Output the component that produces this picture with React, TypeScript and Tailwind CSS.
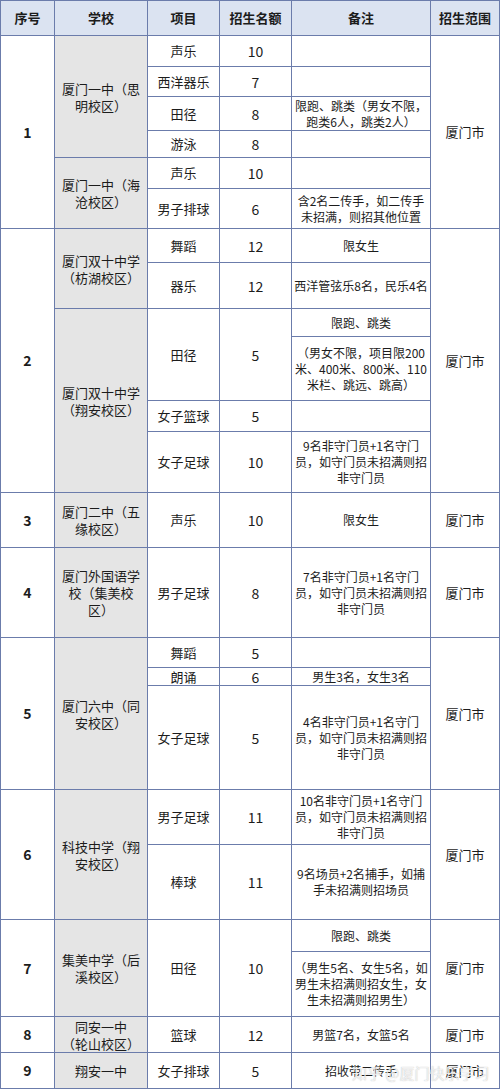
import type { ReactNode } from "react";

const line = "border-r border-b border-[#6b7cab]";

function Cell({
  children,
  className = "",
}: {
  children?: ReactNode;
  className?: string;
}) {
  return (
    <div
      className={`${line} flex items-center justify-center text-center overflow-hidden ${className}`}
    >
      {children}
    </div>
  );
}

function School({ children, className = "" }: { children: ReactNode; className?: string }) {
  return (
    <Cell className={`bg-[#e5e5e5] text-[13px] leading-[17px] ${className}`}>
      <div>{children}</div>
    </Cell>
  );
}

function Item({ children, className = "" }: { children?: ReactNode; className?: string }) {
  return <Cell className={`text-[13px] leading-[16px] ${className}`}>{children}</Cell>;
}

function Num({ children, className = "" }: { children?: ReactNode; className?: string }) {
  return <Cell className={`text-[14px] leading-[16px] ${className}`}>{children}</Cell>;
}

function Note({ children, className = "" }: { children?: ReactNode; className?: string }) {
  return (
    <Cell className={`text-[12px] leading-[16px] ${className}`}>
      <div>{children}</div>
    </Cell>
  );
}

function Seq({ n, className = "" }: { n: string; className?: string }) {
  return <Cell className={`text-[14px] font-bold ${className}`}>{n}</Cell>;
}

function Area({ className = "" }: { className?: string }) {
  return <Cell className={`text-[13px] ${className}`}>厦门市</Cell>;
}

const headers = ["序号", "学校", "项目", "招生名额", "备注", "招生范围"];

export default function App() {
  return (
    <div
      className="relative w-[500px] bg-white text-[#1c1c1c]"
      style={{ fontFamily: '"Noto Sans CJK SC", "Noto Sans", sans-serif' }}
    >
      <div className="grid grid-cols-[54px_93px_72px_72px_139px_69px] grid-rows-[35px_31px_30px_34px_27px_31px_40px_34px_46px_28px_64px_31px_61px_55px_90px_30px_18px_104px_55px_75px_32px_65px_36px_36px] border-t border-l border-[#6b7cab]">
        {headers.map((h) => (
          <Cell key={h} className="bg-[#dbe3f1] text-[13px] font-bold">
            {h}
          </Cell>
        ))}

        {/* 1 */}
        <Seq n="1" className="row-span-6" />
        <School className="row-span-4">
          厦门一中（思
          <br />
          明校区）
        </School>
        <Item>声乐</Item>
        <Num>10</Num>
        <Note />
        <Area className="row-span-6" />
        <Item>西洋器乐</Item>
        <Num>7</Num>
        <Note />
        <Item>田径</Item>
        <Num>8</Num>
        <Note>
          限跑、跳类（男女不限，
          <br />
          跑类6人，跳类2人）
        </Note>
        <Item>游泳</Item>
        <Num>8</Num>
        <Note />
        <School className="row-span-2">
          厦门一中（海
          <br />
          沧校区）
        </School>
        <Item>声乐</Item>
        <Num>10</Num>
        <Note />
        <Item>男子排球</Item>
        <Num>6</Num>
        <Note>
          含2名二传手，如二传手
          <br />
          未招满，则招其他位置
        </Note>

        {/* 2 */}
        <Seq n="2" className="row-span-6" />
        <School className="row-span-2">
          厦门双十中学
          <br />
          （枋湖校区）
        </School>
        <Item>舞蹈</Item>
        <Num>12</Num>
        <Note>限女生</Note>
        <Area className="row-span-6" />
        <Item>器乐</Item>
        <Num>12</Num>
        <Note>西洋管弦乐8名，民乐4名</Note>
        <School className="row-span-4">
          厦门双十中学
          <br />
          （翔安校区）
        </School>
        <Item className="row-span-2">田径</Item>
        <Num className="row-span-2">5</Num>
        <Note>限跑、跳类</Note>
        <Note>
          （男女不限，项目限200
          <br />
          米、400米、800米、110
          <br />
          米栏、跳远、跳高）
        </Note>
        <Item>女子篮球</Item>
        <Num>5</Num>
        <Note />
        <Item>女子足球</Item>
        <Num>10</Num>
        <Note>
          9名非守门员+1名守门
          <br />
          员，如守门员未招满则招
          <br />
          非守门员
        </Note>

        {/* 3 */}
        <Seq n="3" />
        <School>
          厦门二中（五
          <br />
          缘校区）
        </School>
        <Item>声乐</Item>
        <Num>10</Num>
        <Note>限女生</Note>
        <Area />

        {/* 4 */}
        <Seq n="4" />
        <School>
          厦门外国语学
          <br />
          校（集美校
          <br />
          区）
        </School>
        <Item>男子足球</Item>
        <Num>8</Num>
        <Note>
          7名非守门员+1名守门
          <br />
          员，如守门员未招满则招
          <br />
          非守门员
        </Note>
        <Area />

        {/* 5 */}
        <Seq n="5" className="row-span-3" />
        <School className="row-span-3">
          厦门六中（同
          <br />
          安校区）
        </School>
        <Item>舞蹈</Item>
        <Num>5</Num>
        <Note />
        <Area className="row-span-3" />
        <Item>朗诵</Item>
        <Num>6</Num>
        <Note>男生3名，女生3名</Note>
        <Item>女子足球</Item>
        <Num>5</Num>
        <Note>
          4名非守门员+1名守门
          <br />
          员，如守门员未招满则招
          <br />
          非守门员
        </Note>

        {/* 6 */}
        <Seq n="6" className="row-span-2" />
        <School className="row-span-2">
          科技中学（翔
          <br />
          安校区）
        </School>
        <Item>男子足球</Item>
        <Num>11</Num>
        <Note>
          10名非守门员+1名守门
          <br />
          员，如守门员未招满则招
          <br />
          非守门员
        </Note>
        <Area className="row-span-2" />
        <Item>棒球</Item>
        <Num>11</Num>
        <Note>
          9名场员+2名捕手，如捕
          <br />
          手未招满则招场员
        </Note>

        {/* 7 */}
        <Seq n="7" className="row-span-2" />
        <School className="row-span-2">
          集美中学（后
          <br />
          溪校区）
        </School>
        <Item className="row-span-2">田径</Item>
        <Num className="row-span-2">10</Num>
        <Note>限跑、跳类</Note>
        <Area className="row-span-2" />
        <Note>
          （男生5名、女生5名，如
          <br />
          男生未招满则招女生，女
          <br />
          生未招满则招男生）
        </Note>

        {/* 8 */}
        <Seq n="8" />
        <School>
          同安一中
          <br />
          （轮山校区）
        </School>
        <Item>篮球</Item>
        <Num>12</Num>
        <Note>男篮7名，女篮5名</Note>
        <Area />

        {/* 9 */}
        <Seq n="9" />
        <School>翔安一中</School>
        <Item>女子排球</Item>
        <Num>5</Num>
        <Note>招收带二传手</Note>
        <Area />
      </div>

      {/* watermark */}
      <div className="absolute left-[352px] top-[1062px] text-[15px] text-white/80 whitespace-nowrap [text-shadow:0_0_1px_rgba(120,120,120,0.6)]">
        知乎 @厦门快乐学习
      </div>
    </div>
  );
}
